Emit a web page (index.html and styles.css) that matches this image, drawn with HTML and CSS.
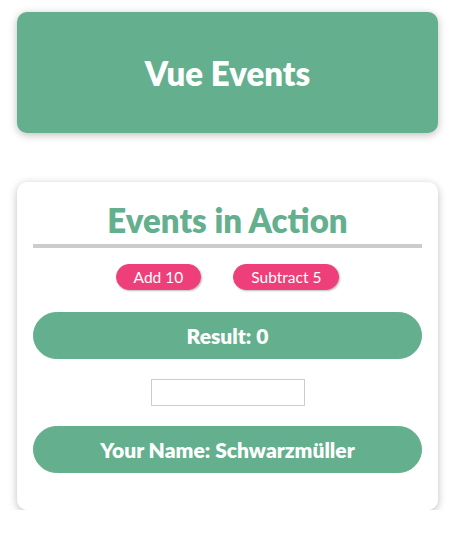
FILE: index.html
```html
<!DOCTYPE html>
<html lang="en">
<head>
<meta charset="utf-8">
<title>Vue Events</title>
<link rel="stylesheet" href="styles.css">
</head>
<body>
<header class="app-header">
  <h1 class="app-title">Vue Events</h1>
</header>
<section class="events">
  <h2 class="events-title">Events in Action</h2>
  <div class="actions">
    <button class="action-btn" type="button">Add 10</button>
    <button class="action-btn" type="button">Subtract 5</button>
  </div>
  <p class="output">Result: 0</p>
  <input class="name-input" type="text">
  <p class="output">Your Name: Schwarzmüller</p>
</section>
</body>
</html>
```

FILE: styles.css
```css
* { box-sizing: border-box; }
html { background: #fff; }
body {
  margin: 0;
  padding: 12px 12px 0 17px;
  font-family: Lato, "Open Sans", sans-serif;
}
.app-header {
  box-shadow: 0 2px 8px rgba(0, 0, 0, 0.26);
  border-radius: 10px;
  background-color: #64af8d;
  color: #fff;
  text-align: center;
  height: 121px;
  display: flex;
  align-items: center;
  justify-content: center;
}
.app-title {
  margin: 0;
  font-size: 33px;
  font-weight: 800;
  line-height: 1;
  padding-top: 2px;
}
.events {
  margin-top: 49px;
  box-shadow: 0 2px 8px rgba(0, 0, 0, 0.26);
  border-radius: 10px;
  padding: 16px;
  text-align: center;
  background: #fff;
}
.events-title {
  margin: 0 0 16px 0;
  font-size: 33px;
  font-weight: 800;
  color: #64af8d;
  line-height: 44px;
  border-bottom: 4px solid #ccc;
  padding-bottom: 2px;
}
.actions {
  display: flex;
  justify-content: center;
  gap: 32px;
}
.action-btn {
  font-family: inherit;
  font-size: 15.5px;
  line-height: 24px;
  height: 26px;
  cursor: pointer;
  border: 1px solid #ee3f7a;
  background-color: #ee3f7a;
  color: #fff;
  padding: 0 17px;
  border-radius: 13px;
  box-shadow: 1px 1px 2px rgba(0, 0, 0, 0.26);
}
.output {
  margin: 22px 0 20px;
  font-size: 21px;
  font-weight: 800;
  line-height: 29px;
  border: 1px solid #64af8d;
  background-color: #64af8d;
  color: #fff;
  padding: 8px;
  border-radius: 25px;
}
.output:last-child { margin: 20px 0 21px; }
.name-input {
  display: block;
  margin: 0 auto;
  width: 154px;
  height: 27px;
  font: inherit;
  border: 1px solid #ccc;
}
```
